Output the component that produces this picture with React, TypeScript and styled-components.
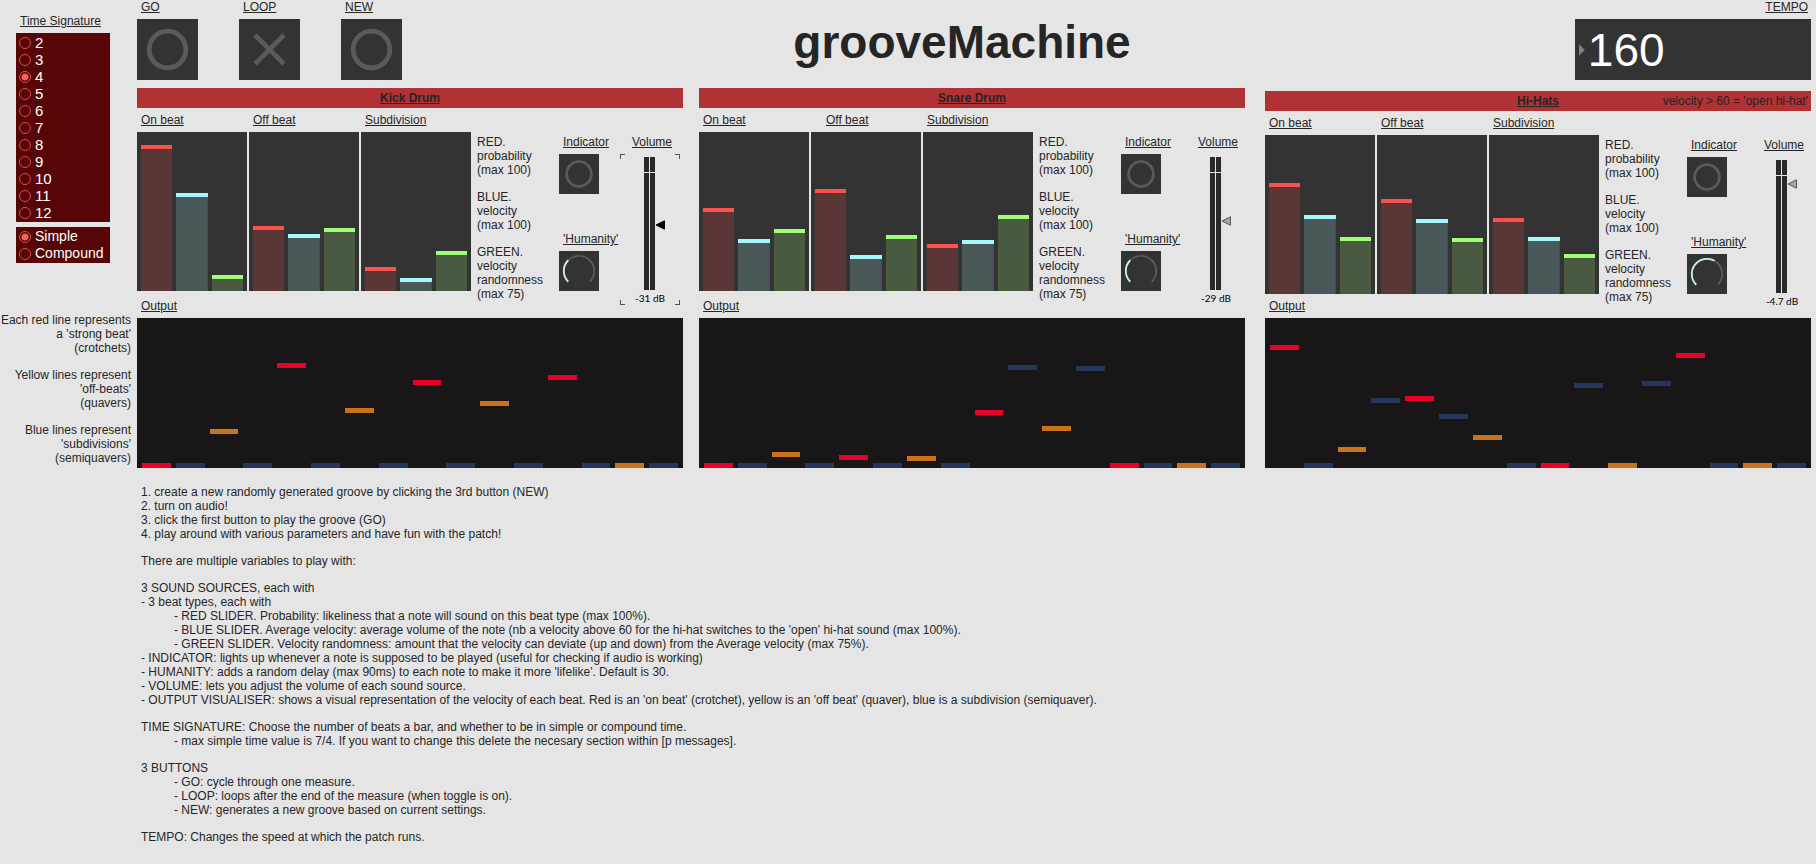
import React, { useState } from "react";
import styled, { createGlobalStyle, css } from "styled-components";

const color = {
  page: "#e5e5e5",
  ink: "#252525",
  dark: "#333333",
  line: "#5a5a5a",
  header: "#b03234",
  screen: "#181617",
  maroon: "#560606",
  radio: "#dc4a47",
};

const GlobalStyle = createGlobalStyle`
  *, *::before, *::after { box-sizing: border-box; }
  body {
    margin: 0;
    background: ${color.page};
    color: ${color.ink};
    font: 12px/14px "Liberation Sans", Arial, sans-serif;
  }
  h1, h2, h3, p, fieldset { margin: 0; padding: 0; border: 0; }
  input, button { font: inherit; color: inherit; margin: 0; padding: 0; border: 0; }
`;

/* ---------- page frame ---------- */

const Page = styled.div`
  display: grid;
  grid-template-columns: 137px minmax(0, 1fr);
  padding-right: 5px;
`;

const Sidebar = styled.aside`
  display: flex;
  flex-direction: column;
  padding-top: 14px;
`;

const labelStyle = css`
  display: block;
  padding-left: 4px;
  font-size: 12px;
  font-weight: normal;
  line-height: 14px;
  text-decoration: underline;
  white-space: nowrap;
`;

const Caption = styled.h3`
  ${labelStyle}
`;

const ControlLabel = styled.label`
  ${labelStyle}
`;

/* ---------- time signature ---------- */

const Signature = styled.section`
  display: flex;
  flex-direction: column;
  gap: 5px;
  width: 94px;
  margin-left: 16px;
`;

const RadioBox = styled.fieldset<{ $size: number }>`
  min-width: 0;
  padding: 1px 3px;
  background: ${color.maroon};
  font-size: ${(p) => p.$size}px;
`;

const RadioRow = styled.label`
  display: flex;
  align-items: center;
  gap: 4px;
  height: 17px;
  color: #fff;
  line-height: 17px;
`;

const Radio = styled.input`
  appearance: none;
  flex: none;
  width: 12px;
  height: 12px;
  border: 1px solid ${color.radio};
  border-radius: 50%;
  &:checked {
    background: radial-gradient(circle, #f0605a 3px, transparent 4px);
  }
`;

const BeatNotes = styled.div`
  display: flex;
  flex-direction: column;
  gap: 13px;
  margin-top: 50px;
  padding-right: 6px;
  text-align: right;
  white-space: pre;
`;

/* ---------- top bar ---------- */

const TopBar = styled.header`
  display: grid;
  grid-template-columns: 1fr auto 1fr;
  height: 88px;
`;

const Buttons = styled.div`
  display: flex;
  gap: 41px;
`;

const Field = styled.div`
  display: flex;
  flex-direction: column;
  gap: 5px;
`;

const TempoField = styled(Field)`
  justify-self: end;
  width: 236px;
  label {
    align-self: flex-end;
    padding-right: 3px;
  }
`;

const PadButton = styled.button`
  width: 61px;
  height: 61px;
  background: ${color.dark};
  cursor: pointer;
  svg { display: block; }
`;

const Title = styled.h1`
  margin-right: 24px;
  padding-top: 15px;
  font-size: 46px;
  line-height: 54px;
`;

const TempoBox = styled.div`
  display: flex;
  align-items: center;
  height: 61px;
  padding-left: 4px;
  background: ${color.dark};
`;

const TempoInput = styled.input`
  width: 100%;
  min-width: 0;
  padding-left: 3px;
  background: none;
  color: #fff;
  font-size: 46px;
  line-height: 60px;
  outline: none;
`;

/* ---------- instrument panels ---------- */

const Panels = styled.div`
  display: flex;
`;

const Panel = styled.section<{ $gap: number; $drop: number }>`
  display: flex;
  flex-direction: column;
  flex: 1 1 0;
  min-width: 0;
  margin-left: ${(p) => p.$gap}px;
  padding-top: ${(p) => p.$drop}px;
`;

const PanelHeader = styled.header`
  display: grid;
  grid-template-columns: 1fr auto 1fr;
  height: 20px;
  padding: 0 3px;
  background: ${color.header};
  line-height: 20px;
  h2 {
    grid-column: 2;
    font-size: 12px;
    line-height: 20px;
    text-decoration: underline;
  }
  span { text-align: right; white-space: nowrap; }
`;

const PanelBody = styled.div`
  display: flex;
  flex: 1;
  padding-bottom: 5px;
`;

const BeatArea = styled.div`
  display: flex;
  flex-direction: column;
  flex: 1;
  gap: 5px;
  min-width: 0;
  padding-top: 5px;
  > :last-child { margin-top: auto; }
`;

const BeatGroups = styled.div`
  display: grid;
  grid-template-columns: repeat(3, minmax(0, 1fr));
  gap: 2px;
`;

const BeatGroup = styled.div<{ $indent?: number }>`
  display: flex;
  flex-direction: column;
  gap: 5px;
  h3 { margin-left: ${(p) => p.$indent ?? 0}px; }
`;

const Sliders = styled.div`
  display: grid;
  grid-template-columns: repeat(3, minmax(0, 1fr));
  gap: 4px;
  height: 159px;
  padding: 0 4px;
  background: ${color.dark};
`;

const LevelSlider = styled.input<{ $cap: string; $fill: string }>`
  appearance: none;
  writing-mode: vertical-lr;
  direction: rtl;
  width: 100%;
  height: 159px;
  background: linear-gradient(${(p) => p.$fill}, ${(p) => p.$fill}) bottom / 100% var(--level) no-repeat;
  &::-webkit-slider-thumb {
    appearance: none;
    width: 100px;
    height: 4px;
    background: ${(p) => p.$cap};
  }
  overflow: hidden;
`;

const Side = styled.div`
  display: flex;
  flex: none;
  width: 212px;
  padding: 27px 3px 0 6px;
`;

const Legend = styled.div`
  display: flex;
  flex-direction: column;
  flex: none;
  gap: 13px;
  width: 82px;
  white-space: pre;
`;

const Meters = styled.div`
  display: flex;
  flex: 1;
  flex-direction: column;
  gap: 38px;
`;

const Tile = styled.div`
  position: relative;
  width: 40px;
  height: 40px;
  background: ${color.dark};
  svg { display: block; }
`;

const KnobInput = styled.input`
  position: absolute;
  inset: 0;
  width: 100%;
  height: 100%;
  opacity: 0;
`;

const VolumeColumn = styled.div<{ $wide: boolean }>`
  display: flex;
  flex-direction: column;
  align-items: center;
  gap: 5px;
  width: ${(p) => (p.$wide ? 60 : 52)}px;
`;

const corner = (x: string, y: string) =>
  `linear-gradient(#555, #555) ${x} ${y} / 5px 1px no-repeat, linear-gradient(#555, #555) ${x} ${y} / 1px 5px no-repeat`;

const VolumeFrame = styled.div<{ $selected: boolean }>`
  display: flex;
  flex-direction: column;
  align-items: center;
  gap: 2px;
  width: 100%;
  height: 151px;
  padding-top: 3px;
  ${(p) =>
    p.$selected &&
    css`
      background: ${corner("left", "top")}, ${corner("right", "top")}, ${corner("left", "bottom")},
        ${corner("right", "bottom")};
    `}
  output {
    color: #000;
    font: 10px/12px Lato, "Liberation Sans", sans-serif;
    white-space: nowrap;
  }
`;

const pointer = (fill: string, stroke: string) =>
  `url("data:image/svg+xml,%3Csvg xmlns='http://www.w3.org/2000/svg' width='10' height='10'%3E%3Cpath d='M1 5 9.500 .8V9.200Z' fill='%23${fill}' stroke='%23${stroke}'/%3E%3C/svg%3E")`;

const VolumeSlider = styled.input<{ $selected: boolean }>`
  appearance: none;
  writing-mode: vertical-lr;
  direction: rtl;
  width: 30px;
  height: 133px;
  background:
    linear-gradient(${color.page}, ${color.page}) 0 15px / 100% 1px no-repeat,
    linear-gradient(#292929, #292929) 9px 0 / 5px 100% no-repeat,
    linear-gradient(#292929, #292929) 15px 0 / 5px 100% no-repeat;
  &::-webkit-slider-thumb {
    appearance: none;
    width: 30px;
    height: 10px;
    background: ${(p) => (p.$selected ? pointer("000", "000") : pointer("a8a8a8", "555"))} right center no-repeat;
  }
`;

/* ---------- output visualiser ---------- */

const Screen = styled.div`
  display: grid;
  grid-template-columns: repeat(16, minmax(0, 1fr));
  gap: 5px;
  align-items: end;
  height: 150px;
  padding: 0 5px;
  background: ${color.screen};
`;

const Note = styled.div<{ $color: string }>`
  height: 5px;
  background: ${(p) => p.$color};
`;

/* ---------- instructions ---------- */

const Instructions = styled.section`
  display: flex;
  flex-direction: column;
  gap: 13px;
  padding: 17px 4px 20px;
`;

const Line = styled.p<{ $indent?: boolean }>`
  padding-left: ${(p) => (p.$indent ? 33 : 0)}px;
`;

/* ---------- data ---------- */

const levelKinds = [
  { name: "probability", cap: "#ff5050", fill: "#5a3636" },
  { name: "velocity", cap: "#a5f8fb", fill: "#4a5859" },
  { name: "velocity randomness", cap: "#a0fd78", fill: "#495a40" },
];

const noteColors = ["#e80029", "#26355b", "#cb731b", "#26355b"];

type Instrument = {
  name: string;
  note?: string;
  gap: number;
  drop: number;
  offBeatIndent?: number;
  levels: number[][];
  humanity: number;
  volume: number;
  db: string;
  selected: boolean;
  notes: number[];
};

const instruments: Instrument[] = [
  {
    name: "Kick Drum",
    gap: 0,
    drop: 0,
    levels: [[142, 94, 12], [61, 53, 59], [20, 9, 36]],
    humanity: 30,
    volume: 60,
    db: "-31 dB",
    selected: true,
    notes: [0, 0, 34, 0, 100, 0, 55, 0, 83, 0, 62, 0, 88, 0, 0, 0],
  },
  {
    name: "Snare Drum",
    gap: 16,
    drop: 0,
    offBeatIndent: 11,
    levels: [[79, 48, 58], [98, 32, 52], [43, 47, 72]],
    humanity: 30,
    volume: 64,
    db: "-29 dB",
    selected: false,
    notes: [0, 0, 11, 0, 8, 0, 7, 0, 53, 98, 37, 97, 0, 0, 0, 0],
  },
  {
    name: "Hi-Hats",
    note: "velocity > 60 = 'open hi-hat'",
    gap: 20,
    drop: 3,
    levels: [[107, 75, 53], [91, 71, 52], [72, 53, 36]],
    humanity: 55,
    volume: 104,
    db: "-4.7 dB",
    selected: false,
    notes: [118, 0, 16, 65, 67, 49, 28, 0, 0, 80, 0, 82, 110, 0, 0, 0],
  },
];

const beatNotes = [
  "Each red line represents\na 'strong beat'\n(crotchets)",
  "Yellow lines represent\n'off-beats'\n(quavers)",
  "Blue lines represent\n'subdivisions'\n(semiquavers)",
];

const legend = [
  "RED.\nprobability\n(max 100)",
  "BLUE.\nvelocity\n(max 100)",
  "GREEN.\nvelocity\nrandomness\n(max 75)",
];

/* A leading tab marks an indented line. */
const instructions = [
  [
    "1. create a new randomly generated groove by clicking the 3rd button (NEW)",
    "2. turn on audio!",
    "3. click the first button to play the groove (GO)",
    "4. play around with various parameters and have fun with the patch!",
  ],
  ["There are multiple variables to play with:"],
  [
    "3 SOUND SOURCES, each with",
    "- 3 beat types, each with",
    "\t- RED SLIDER. Probability: likeliness that a note will sound on this beat type (max 100%).",
    "\t- BLUE SLIDER. Average velocity: average volume of the note (nb a velocity above 60 for the hi-hat switches to the 'open' hi-hat sound (max 100%).",
    "\t- GREEN SLIDER. Velocity randomness: amount that the velocity can deviate (up and down) from the Average velocity (max 75%).",
    "- INDICATOR: lights up whenever a note is supposed to be played (useful for checking if audio is working)",
    "- HUMANITY: adds a random delay (max 90ms) to each note to make it more 'lifelike'. Default is 30.",
    "- VOLUME: lets you adjust the volume of each sound source.",
    "- OUTPUT VISUALISER: shows a visual representation of the velocity of each beat. Red is an 'on beat' (crotchet), yellow is an 'off beat' (quaver), blue is a subdivision (semiquaver).",
  ],
  [
    "TIME SIGNATURE: Choose the number of beats a bar, and whether to be in simple or compound time.",
    "\t- max simple time value is 7/4. If you want to change this delete the necesary section within [p messages].",
  ],
  [
    "3 BUTTONS",
    "\t- GO: cycle through one measure.",
    "\t- LOOP: loops after the end of the measure (when toggle is on).",
    "\t- NEW: generates a new groove based on current settings.",
  ],
  ["TEMPO: Changes the speed at which the patch runs."],
];

/* ---------- drawings ---------- */

const RingIcon = ({ size, r, width }: { size: number; r: number; width: number }) => (
  <svg width={size} height={size} viewBox={`0 0 ${size} ${size}`} fill="none" aria-hidden="true">
    <circle cx={size / 2} cy={size / 2} r={r} stroke={color.line} strokeWidth={width} />
  </svg>
);

const CrossIcon = () => (
  <svg width="61" height="61" viewBox="0 0 61 61" fill="none" aria-hidden="true">
    <path d="M16 16 45 45M45 16 16 45" stroke={color.line} strokeWidth="4.600" />
  </svg>
);

const point = (deg: number) => {
  const a = ((deg - 90) * Math.PI) / 180;
  return `${20 + 15.200 * Math.cos(a)} ${20 + 15.200 * Math.sin(a)}`;
};

const arc = (from: number, to: number) =>
  `M${point(from)}A15.200 15.200 0 ${to - from > 180 ? 1 : 0} 1 ${point(to)}`;

const DialIcon = ({ value }: { value: number }) => (
  <svg width="40" height="40" viewBox="0 0 40 40" fill="none" aria-hidden="true">
    <path d={arc(-135, 135)} stroke={color.line} strokeWidth="1.800" />
    <path d={arc(-135, -135 + value * 3)} stroke="#cdeff1" strokeWidth="1.800" />
  </svg>
);

/* ---------- components ---------- */

const Level = ({ initial, label, kind }: { initial: number; label: string; kind: (typeof levelKinds)[number] }) => {
  const [value, setValue] = useState(initial);
  return (
    <LevelSlider
      type="range"
      min={0}
      max={155}
      value={value}
      aria-label={label}
      $cap={kind.cap}
      $fill={kind.fill}
      style={{ "--level": `${value + 2}px` } as React.CSSProperties}
      onChange={(e) => setValue(Number(e.target.value))}
    />
  );
};

const InstrumentPanel = ({ data }: { data: Instrument }) => {
  const [humanity, setHumanity] = useState(data.humanity);
  const id = data.name.replace(/\W/g, "").toLowerCase();
  return (
    <Panel $gap={data.gap} $drop={data.drop}>
      <PanelHeader>
        <h2>{data.name}</h2>
        {data.note && <span>{data.note}</span>}
      </PanelHeader>
      <PanelBody>
        <BeatArea>
          <BeatGroups>
            {["On beat", "Off beat", "Subdivision"].map((beat, i) => (
              <BeatGroup key={beat} $indent={i === 1 ? data.offBeatIndent : 0}>
                <Caption>{beat}</Caption>
                <Sliders>
                  {levelKinds.map((kind, j) => (
                    <Level
                      key={kind.name}
                      initial={data.levels[i][j]}
                      label={`${data.name} ${beat} ${kind.name}`}
                      kind={kind}
                    />
                  ))}
                </Sliders>
              </BeatGroup>
            ))}
          </BeatGroups>
          <Caption>Output</Caption>
        </BeatArea>
        <Side>
          <Legend>
            {legend.map((text) => (
              <p key={text}>{text}</p>
            ))}
          </Legend>
          <Meters>
            <Field>
              <Caption>Indicator</Caption>
              <Tile>
                <RingIcon size={40} r={12.4} width={2.8} />
              </Tile>
            </Field>
            <Field>
              <ControlLabel htmlFor={`${id}-humanity`}>'Humanity'</ControlLabel>
              <Tile>
                <DialIcon value={humanity} />
                <KnobInput
                  id={`${id}-humanity`}
                  type="range"
                  min={0}
                  max={90}
                  value={humanity}
                  onChange={(e) => setHumanity(Number(e.target.value))}
                />
              </Tile>
            </Field>
          </Meters>
          <VolumeColumn $wide={data.selected}>
            <ControlLabel htmlFor={`${id}-volume`}>Volume</ControlLabel>
            <VolumeFrame $selected={data.selected}>
              <VolumeSlider
                id={`${id}-volume`}
                type="range"
                min={0}
                max={123}
                defaultValue={data.volume}
                $selected={data.selected}
              />
              <output htmlFor={`${id}-volume`}>{data.db}</output>
            </VolumeFrame>
          </VolumeColumn>
        </Side>
      </PanelBody>
      <Screen>
        {data.notes.map((height, i) => (
          <Note key={i} $color={noteColors[i % 4]} style={{ marginBottom: height }} />
        ))}
      </Screen>
    </Panel>
  );
};

const beats = ["2", "3", "4", "5", "6", "7", "8", "9", "10", "11", "12"];

export default function App() {
  const [looping, setLooping] = useState(false);
  return (
    <>
      <GlobalStyle />
      <Page>
        <Sidebar>
          <Signature>
            <Caption>Time Signature</Caption>
            <RadioBox $size={15} aria-label="Beats in a bar">
              {beats.map((n) => (
                <RadioRow key={n}>
                  <Radio type="radio" name="beats" value={n} defaultChecked={n === "4"} />
                  {n}
                </RadioRow>
              ))}
            </RadioBox>
            <RadioBox $size={14} aria-label="Time type">
              {["Simple", "Compound"].map((t) => (
                <RadioRow key={t}>
                  <Radio type="radio" name="time" value={t} defaultChecked={t === "Simple"} />
                  {t}
                </RadioRow>
              ))}
            </RadioBox>
          </Signature>
          <BeatNotes>
            {beatNotes.map((text) => (
              <p key={text}>{text}</p>
            ))}
          </BeatNotes>
        </Sidebar>
        <main>
          <TopBar>
            <Buttons>
              <Field>
                <ControlLabel htmlFor="go">GO</ControlLabel>
                <PadButton id="go" type="button">
                  <RingIcon size={61} r={18.3} width={4.8} />
                </PadButton>
              </Field>
              <Field>
                <ControlLabel htmlFor="loop">LOOP</ControlLabel>
                <PadButton id="loop" type="button" aria-pressed={looping} onClick={() => setLooping(!looping)}>
                  <CrossIcon />
                </PadButton>
              </Field>
              <Field>
                <ControlLabel htmlFor="new">NEW</ControlLabel>
                <PadButton id="new" type="button">
                  <RingIcon size={61} r={18.3} width={4.8} />
                </PadButton>
              </Field>
            </Buttons>
            <Title>grooveMachine</Title>
            <TempoField>
              <ControlLabel htmlFor="tempo">TEMPO</ControlLabel>
              <TempoBox>
                <svg width="6" height="12" viewBox="0 0 6 12" aria-hidden="true">
                  <path d="M0 0 6 6 0 12Z" fill="#808080" />
                </svg>
                <TempoInput id="tempo" type="text" inputMode="numeric" defaultValue="160" />
              </TempoBox>
            </TempoField>
          </TopBar>
          <Panels>
            {instruments.map((data) => (
              <InstrumentPanel key={data.name} data={data} />
            ))}
          </Panels>
          <Instructions>
            {instructions.map((block) => (
              <div key={block[0]}>
                {block.map((line) => (
                  <Line key={line} $indent={line.startsWith("\t")}>
                    {line.trim()}
                  </Line>
                ))}
              </div>
            ))}
          </Instructions>
        </main>
      </Page>
    </>
  );
}
